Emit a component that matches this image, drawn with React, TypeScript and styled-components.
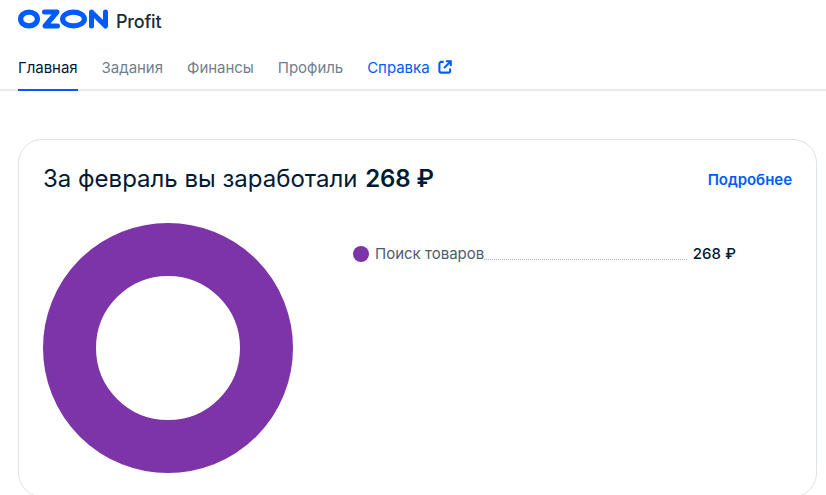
import React from "react";
import styled, { createGlobalStyle } from "styled-components";

const Global = createGlobalStyle`
  html, body { margin: 0; padding: 0; background: #fff; overflow: hidden; }
  body { font-family: Inter, "Liberation Sans", sans-serif; color: #001a34; }
`;

const Page = styled.div`
  width: 826px;
  height: 495px;
  overflow: hidden;
`;

const Header = styled.header`
  height: 89px;
  border-bottom: 2px solid #e8ebf1;
  box-sizing: content-box;
  padding: 0 18px;
`;

const LogoRow = styled.div`
  display: flex;
  align-items: center;
  gap: 8px;
  height: 42px;
`;

const LogoMark = styled.svg`
  display: block;
  flex: none;
  margin-bottom: 5px;
`;

const ProfitText = styled.span`
  font-size: 18px;
  font-weight: 500;
  letter-spacing: -0.2px;
  color: #1a2b3f;
`;

const Nav = styled.nav`
  display: flex;
  gap: 24px;
  height: 49px;
`;

const Tab = styled.a<{ $active?: boolean; $link?: boolean }>`
  display: flex;
  align-items: center;
  gap: 8px;
  height: 49px;
  box-sizing: border-box;
  padding-top: 3px;
  font-size: 15px;
  letter-spacing: -0.03px;
  color: ${(p) => (p.$active ? "#001a34" : p.$link ? "#005bff" : "#707f8d")};
  border-bottom: 2px solid ${(p) => (p.$active ? "#005bff" : "transparent")};
`;

const Main = styled.main`
  padding: 48px 9px 0 18px;
`;

const Card = styled.section`
  height: 358px;
  box-sizing: border-box;
  border: 1px solid #dde3ea;
  border-radius: 24px;
  padding: 24px 24px 0;
`;

const CardHead = styled.div`
  display: flex;
  justify-content: space-between;
  align-items: center;
  height: 30px;
`;

const Title = styled.h2`
  margin: 0;
  font-size: 24px;
  font-weight: 400;
  color: #001a34;
  line-height: 30px;
`;

const Amount = styled.b`
  font-weight: 600;
  margin-left: 1px;
  letter-spacing: -0.15px;
`;

const More = styled.a`
  font-size: 15px;
  font-weight: 600;
  letter-spacing: -0.03px;
  color: #005bff;
`;

const Body = styled.div`
  display: flex;
  margin-top: 29px;
`;

const Donut = styled.svg`
  width: 250px;
  height: 250px;
  flex: none;
  display: block;
`;

const Legend = styled.div`
  margin-left: 60px;
  width: 383px;
  padding-top: 15px;
`;

const LegendRow = styled.div`
  display: flex;
  align-items: center;
  height: 31px;
  font-size: 15px;
`;

const Dot = styled.span`
  width: 16px;
  height: 16px;
  border-radius: 50%;
  background: #7c34a8;
  flex: none;
  margin-right: 6px;
`;

const LegendName = styled.span`
  color: #4d5d6d;
`;

const Leader = styled.span`
  flex: 1;
  height: 10px;
  margin: 0 6px 0 0;
  border-bottom: 1px dotted #a9b7c6;
  position: relative;
  top: 1px;
`;

const LegendValue = styled.span`
  color: #001a34;
  font-weight: 500;
  letter-spacing: 0.1px;
`;

const ExternalIcon = () => (
  <svg width="14" height="14" viewBox="0 0 15 15" fill="none" stroke="#005bff" strokeWidth="2.200">
    <path d="M6 2H3.500A2 2 0 0 0 1.500 4v7.500a2 2 0 0 0 2 2H11a2 2 0 0 0 2-2V9" />
    <path d="M6.500 8.500 13 2" />
    <path d="M8.500 1.300h5.200v5.200" />
  </svg>
);

const OzonLogo = () => (
  <LogoMark width="90" height="20" viewBox="0 0 90 20" fill="none" stroke="#005bff">
    <ellipse cx="11" cy="10" rx="8.400" ry="6.900" strokeWidth="5.200" />
    <path d="M26.500 3h12.500L27 17h12.500" strokeWidth="5" strokeLinejoin="round" strokeLinecap="round" />
    <ellipse cx="55.500" cy="10" rx="10.900" ry="6.900" strokeWidth="5.200" />
    <path d="M73.500 17V3l14 14V3" strokeWidth="5" strokeLinejoin="round" strokeLinecap="round" />
  </LogoMark>
);

export default function App() {
  return (
    <Page>
      <Global />
      <Header>
        <LogoRow>
          <OzonLogo />
          <ProfitText>Profit</ProfitText>
        </LogoRow>
        <Nav>
          <Tab $active>Главная</Tab>
          <Tab>Задания</Tab>
          <Tab>Финансы</Tab>
          <Tab>Профиль</Tab>
          <Tab $link>
            Справка
            <ExternalIcon />
          </Tab>
        </Nav>
      </Header>
      <Main>
        <Card>
          <CardHead>
            <Title>
              За февраль вы заработали <Amount>268 ₽</Amount>
            </Title>
            <More>Подробнее</More>
          </CardHead>
          <Body>
            <Donut viewBox="0 0 250 250">
              <circle cx="125" cy="125" r="98.500" fill="none" stroke="#7c34a8" strokeWidth="53" />
            </Donut>
            <Legend>
              <LegendRow>
                <Dot />
                <LegendName>Поиск товаров</LegendName>
                <Leader />
                <LegendValue>268 ₽</LegendValue>
              </LegendRow>
            </Legend>
          </Body>
        </Card>
      </Main>
    </Page>
  );
}
